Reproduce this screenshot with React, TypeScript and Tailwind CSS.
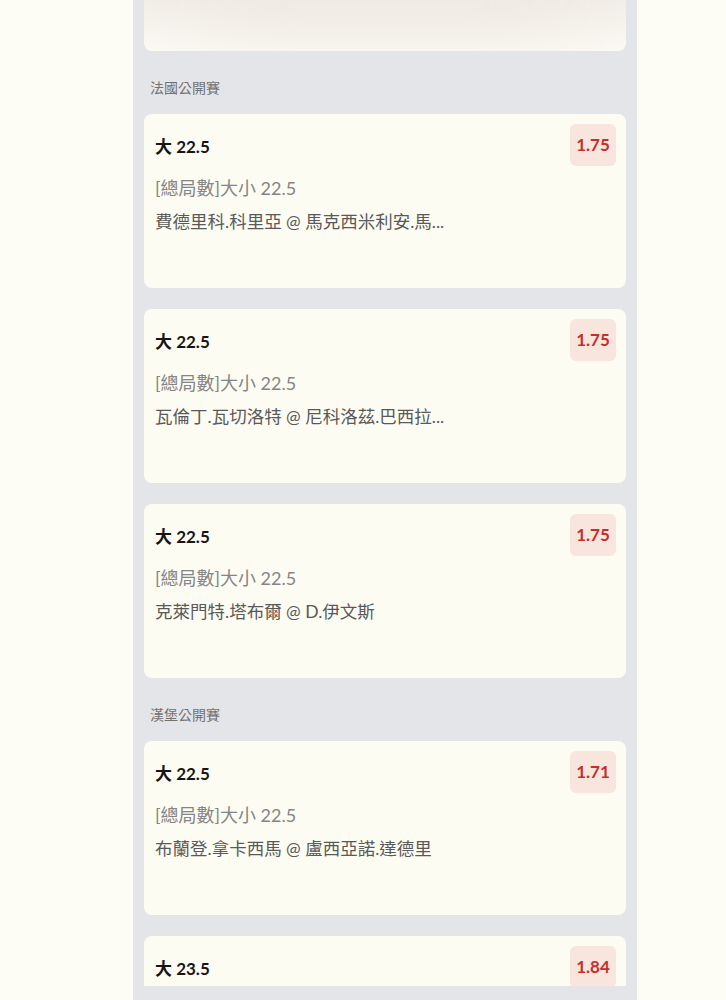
const cjk = "font-['Lato','Noto_Sans_CJK_TC',sans-serif]";

type Bet = {
  pick: string;
  market?: string;
  match?: string;
  odds: string;
};

const sections: { league: string; bets: Bet[] }[] = [
  {
    league: '法國公開賽',
    bets: [
      {
        pick: '大 22.5',
        market: '[總局數]大小 22.5',
        match: '費德里科.科里亞 @ 馬克西米利安.馬...',
        odds: '1.75',
      },
      {
        pick: '大 22.5',
        market: '[總局數]大小 22.5',
        match: '瓦倫丁.瓦切洛特 @ 尼科洛茲.巴西拉...',
        odds: '1.75',
      },
      {
        pick: '大 22.5',
        market: '[總局數]大小 22.5',
        match: '克萊門特.塔布爾 @ D.伊文斯',
        odds: '1.75',
      },
    ],
  },
  {
    league: '漢堡公開賽',
    bets: [
      {
        pick: '大 22.5',
        market: '[總局數]大小 22.5',
        match: '布蘭登.拿卡西馬 @ 盧西亞諾.達德里',
        odds: '1.71',
      },
      // rest of this card is below the fold
      { pick: '大 23.5', odds: '1.84' },
    ],
  },
];

const BetCard = ({ bet }: { bet: Bet }) => {
  return (
    <div className="flex h-[174px] shrink-0 justify-between rounded-lg bg-[#fdfcf3]">
      <div className="pl-[11px] pt-[21px]">
        <p className="text-[17px] font-bold leading-[24px] text-[#161616]">
          {bet.pick}
        </p>
        {bet.market && (
          <p className="mt-[17px] text-[18px] leading-[24px] text-[#858585]">
            {bet.market}
          </p>
        )}
        {bet.match && (
          <p className="mt-[10px] text-[17.5px] leading-[24px] text-[#595959]">
            {bet.match}
          </p>
        )}
      </div>
      <div className="mr-[10px] mt-[10px] flex h-[42px] w-[46px] items-center justify-center rounded-md bg-[#f8e5dd] text-[17px] font-bold text-[#c22f2c]">
        {bet.odds}
      </div>
    </div>
  );
};

export default function App() {
  return (
    <div className={`min-h-screen bg-[#fdfdf5] ${cjk}`}>
      <div className="ml-[133px] h-[1000px] w-[504px] bg-[#e4e5e9] px-[11px]">
        <div className="flex h-[986px] flex-col overflow-hidden">
          <div className="flex h-[51px] shrink-0 justify-center overflow-hidden rounded-b-lg bg-gradient-to-b from-[#f2eee8] to-[#fbfaf3] px-[50px]">
            <div className="-mt-[16px] h-[40px] w-full rounded-full bg-[#ebe6dd] blur-2xl" />
          </div>
          {sections.map((section) => (
            <div key={section.league} className="flex shrink-0 flex-col">
              <p className="mb-[16px] ml-[6px] mt-[27px] text-[14px] leading-[20px] text-[#727272]">
                {section.league}
              </p>
              <div className="flex flex-col gap-[21px]">
                {section.bets.map((bet, i) => (
                  <BetCard key={i} bet={bet} />
                ))}
              </div>
            </div>
          ))}
        </div>
      </div>
    </div>
  );
}
